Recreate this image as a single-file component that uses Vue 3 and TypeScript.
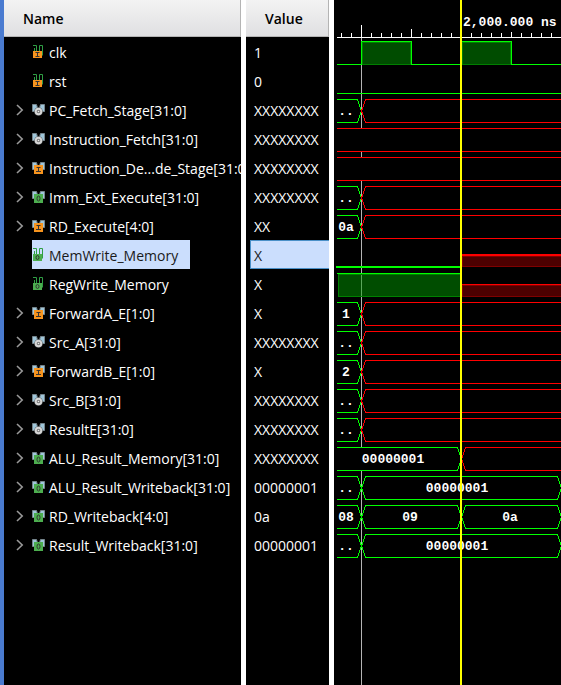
<script setup lang="ts">
type Kind = 'in' | 'out' | 'wire'
type Tone = 'g' | 'r'

interface Segment {
  from: number
  to: number
  tone: Tone
  text?: string
  at?: number
}

interface Signal {
  name: string
  value: string
  kind: Kind
  bus: boolean
  wave: 'clock' | 'low' | 'memwrite' | 'regwrite' | 'bus'
  segments?: Segment[]
  selected?: boolean
}

const T1 = 27.5
const T2 = 127.5
const T3 = 227.5
const END = 4000
const START = 3

const thenUnknown = (text: string): Segment[] => [
  { from: START, to: T1, tone: 'g', text, at: 12 },
  { from: T1, to: END, tone: 'r' },
]
const unknown: Segment[] = [{ from: START, to: END, tone: 'r' }]
const thenOne: Segment[] = [
  { from: START, to: T1, tone: 'g', text: '..', at: 12 },
  { from: T1, to: T3, tone: 'g', text: '00000001', at: 123 },
]

const bus = (name: string, value: string, kind: Kind, segments: Segment[]): Signal => ({
  name, value, kind, segments, bus: true, wave: 'bus',
})

const X8 = 'XXXXXXXX'

const signals: Signal[] = [
  { name: 'clk', value: '1', kind: 'in', bus: false, wave: 'clock' },
  { name: 'rst', value: '0', kind: 'in', bus: false, wave: 'low' },
  bus('PC_Fetch_Stage[31:0]', X8, 'wire', thenUnknown('..')),
  bus('Instruction_Fetch[31:0]', X8, 'wire', unknown),
  bus('Instruction_De...de_Stage[31:0]', X8, 'in', unknown),
  bus('Imm_Ext_Execute[31:0]', X8, 'out', thenUnknown('..')),
  bus('RD_Execute[4:0]', 'XX', 'in', thenUnknown('0a')),
  { name: 'MemWrite_Memory', value: 'X', kind: 'out', bus: false, wave: 'memwrite', selected: true },
  { name: 'RegWrite_Memory', value: 'X', kind: 'out', bus: false, wave: 'regwrite' },
  bus('ForwardA_E[1:0]', 'X', 'in', thenUnknown('1')),
  bus('Src_A[31:0]', X8, 'wire', thenUnknown('..')),
  bus('ForwardB_E[1:0]', 'X', 'in', thenUnknown('2')),
  bus('Src_B[31:0]', X8, 'wire', thenUnknown('..')),
  bus('ResultE[31:0]', X8, 'wire', thenUnknown('..')),
  bus('ALU_Result_Memory[31:0]', X8, 'out', [
    { from: START, to: T2, tone: 'g', text: '00000001', at: 59 },
    { from: T2, to: END, tone: 'r' },
  ]),
  bus('ALU_Result_Writeback[31:0]', '00000001', 'out', thenOne),
  bus('RD_Writeback[4:0]', '0a', 'out', [
    { from: START, to: T1, tone: 'g', text: '08', at: 12 },
    { from: T1, to: T2, tone: 'g', text: '09', at: 76 },
    { from: T2, to: T3, tone: 'g', text: '0a', at: 176 },
  ]),
  bus('Result_Writeback[31:0]', '00000001', 'out', thenOne),
]

// Outline of one bus value: flat rails that taper to a point at each transition.
function outline(s: Segment): string {
  const head = s.from === START ? `M${START} 27.5H${s.to - 4}` : `M${s.from} 16L${s.from + 4} 27.5H${s.to - 4}`
  const tail = `L${s.to} 16L${s.to - 4} 4.5`
  return s.from === START ? `${head}${tail}H${START}` : `${head}${tail}H${s.from + 4}L${s.from} 16`
}

const tickTop = (i: number): number => {
  if (i === 2) return 25
  if (i === 7) return 29
  return i % 5 === 2 ? 32 : 33
}

const ticks = Array.from({ length: 400 }, (_, i) => i)
  .filter((i) => i !== 12)
  .map((i) => ({ x: 7.5 + i * 10, top: tickTop(i) }))
</script>

<template>
  <main class="viewer">
    <table class="signals">
      <colgroup>
        <col class="col-name" />
        <col class="col-value" />
        <col />
      </colgroup>
      <thead>
        <tr>
          <th class="head" scope="col">Name</th>
          <th class="head" scope="col">Value</th>
          <th class="ruler" scope="col">
            <svg class="wave ruler-art" aria-hidden="true">
              <path class="tick" d="M3 37.5H4000" />
              <path v-for="t in ticks" :key="t.x" class="tick" :d="`M${t.x} ${t.top}V37`" />
            </svg>
            <span class="time">2,000.000 ns</span>
          </th>
        </tr>
      </thead>
      <tbody>
        <tr v-for="s in signals" :key="s.name" :class="{ selected: s.selected }">
          <td>
            <div class="name-row">
              <span class="toggle-slot">
                <button v-if="s.bus" type="button" class="toggle" :aria-label="`Expand ${s.name}`">
                  <svg width="8" height="12" viewBox="0 0 8 12"><path d="M1 1L6.2 6L1 11" /></svg>
                </button>
              </span>
              <span class="label">
                <svg v-if="s.bus" class="icon" width="13" height="12" viewBox="0 0 13 12" aria-hidden="true">
                  <path class="flag" d="M0.5 0.5H4.5L5.5 4V7.5H0.5Z" />
                  <path class="flag" d="M12.5 0.5H8.5L7.5 4V7.5H12.5Z" />
                  <template v-if="s.kind === 'wire'">
                    <circle cx="6.5" cy="7.5" r="4.3" class="ring-edge" />
                    <circle cx="6.5" cy="7.5" r="2.8" class="ring" />
                    <circle cx="6.5" cy="7.5" r="0.8" class="ring-dot" />
                  </template>
                  <g v-else :class="['badge', s.kind]">
                    <rect x="2" y="3" width="9" height="9" />
                    <path v-if="s.kind === 'in'" d="M4.5 5.5H8.5M6.5 5.5V9.5M4 9.5H9" />
                    <ellipse v-else cx="6.5" cy="7.5" rx="1.5" ry="2.5" />
                  </g>
                </svg>
                <svg v-else class="icon" width="13" height="13" viewBox="0 0 13 13" aria-hidden="true">
                  <path class="pulse" d="M1 0.5H4.5V7M7.5 7V0.5H10.5V10.5M2.5 6V3" />
                  <g :class="['badge', s.kind]">
                    <rect x="1" y="6" width="9" height="7" />
                    <path v-if="s.kind === 'in'" d="M3.5 7.5H7.5M5.5 7.5V11.5M3.5 11.5H7.5" />
                    <ellipse v-else cx="5.5" cy="9.5" rx="1.5" ry="2" />
                  </g>
                </svg>
                <span class="text">{{ s.name }}</span>
              </span>
            </div>
          </td>
          <td><div class="value">{{ s.value }}</div></td>
          <td>
            <svg class="wave" role="img" :aria-label="`${s.name} waveform`">
              <path class="marker" d="M27.5 0V29" />
              <template v-if="s.wave === 'clock'">
                <rect class="fill-g" x="28.5" y="5.5" width="48" height="22" />
                <rect class="fill-g" x="128.5" y="5.5" width="48" height="22" />
                <path class="line g" d="M3 27.5H27.5V4.5H77.5V27.5H127.5V4.5H177.5V27.5H4000" />
                <path class="base-g" d="M28 27.5H77M128 27.5H177" />
              </template>
              <path v-else-if="s.wave === 'low'" class="line g" d="M3 27.5H4000" />
              <template v-else-if="s.wave === 'memwrite'">
                <path class="line g thick" d="M2 30H127" transform="translate(0 -3)" />
                <rect class="fill-r" x="128.5" y="16.5" width="4000" height="10" />
                <path class="line r thick" d="M128 14H4000" transform="translate(0 1)" />
              </template>
              <template v-else-if="s.wave === 'regwrite'">
                <rect class="fill-g clear" x="4.5" y="5.5" width="123" height="22" />
                <path class="line g" d="M3 4.5H127" />
                <rect class="fill-r" x="128.5" y="16.5" width="4000" height="11" />
                <path class="line r" d="M128 15.5H4000" />
              </template>
              <template v-else>
                <template v-for="seg in s.segments" :key="seg.from">
                  <path :class="['line', 'body', seg.tone]" :d="outline(seg)" />
                  <text v-if="seg.text" :x="seg.at" y="20">{{ seg.text }}</text>
                </template>
              </template>
            </svg>
          </td>
        </tr>
        <tr class="rest">
          <td></td>
          <td></td>
          <td class="wave-rest"></td>
        </tr>
      </tbody>
    </table>
  </main>
</template>

<style>
body {
  margin: 0;
  background: #000;
}
</style>

<style scoped>
.viewer {
  box-sizing: border-box;
  min-height: 100vh;
  border-left: 4px solid #4a7bd0;
  background: #000;
  color: #fff;
  font: 14px/20px 'Open Sans', 'Noto Sans', sans-serif;
  overflow: hidden;
}
.signals {
  width: 100%;
  height: 100vh;
  table-layout: fixed;
  border-collapse: separate;
  border-spacing: 0;
}
.col-name { width: 242px; }
.col-value { width: 88px; }
th, td {
  box-sizing: border-box;
  padding: 0;
  text-align: left;
  vertical-align: top;
}
th:not(:last-child), td:not(:last-child) { border-right: 5px solid #fff; }
thead tr { height: 37px; }
tbody tr { height: 29px; }
tbody tr.rest { height: auto; }
.head {
  height: 37px;
  padding-left: 19px;
  color: #000;
  font-weight: 600;
  vertical-align: middle;
  background: linear-gradient(#f3f3f3, #dfdfe1);
  box-shadow: inset -1px -1px #b4b4b4;
}
.ruler {
  position: relative;
  height: 37px;
}
.wave {
  display: block;
  width: 100%;
  height: 29px;
}
.ruler-art {
  height: 37px;
  overflow: visible;
}
.time {
  position: absolute;
  left: 129px;
  top: 13px;
  font: bold 13px/20px 'Liberation Mono', monospace;
  white-space: nowrap;
}
/* Cursor bar, drawn above the ruler and every row. */
.ruler::after {
  content: '';
  position: absolute;
  z-index: 1;
  left: 126px;
  top: 0;
  width: 2px;
  height: 100vh;
  min-height: 560px;
  background: #ff0;
}
.name-row {
  display: flex;
  height: 29px;
  overflow: hidden;
  white-space: nowrap;
}
.toggle-slot {
  flex: none;
  display: flex;
  align-items: center;
  width: 28px;
}
.toggle {
  display: flex;
  margin-left: 12px;
  padding: 0;
  border: 0;
  background: none;
}
.toggle path {
  fill: none;
  stroke: #999;
  stroke-width: 1.6;
}
.label {
  flex: none;
  display: flex;
  align-items: center;
  gap: 4px;
  padding-right: 12px;
}
.text {
  align-self: flex-start;
  line-height: 31px;
}
.value {
  box-sizing: border-box;
  height: 29px;
  margin-left: 4px;
  padding-left: 4px;
  line-height: 31px;
}
.selected .label {
  background: #cbdefd;
  color: #1a1a1a;
}
.selected .value {
  border: solid #4a90c8;
  border-width: 1px 0 1px 1px;
  padding-left: 3px;
  line-height: 29px;
  background: #cbdefd;
  color: #1a1a1a;
}
.icon { flex: none; }
.flag { fill: #9fc6da; stroke: #76858c; }
.ring-edge { fill: #55595c; }
.ring { fill: #777; stroke: #d6d6d6; stroke-width: 2; }
.ring-dot { fill: #eee; }
.pulse { fill: none; stroke: #2f9e44; stroke-width: 1; }
.badge path, .badge ellipse { fill: none; stroke: #333; stroke-width: 1; }
.badge.in rect { fill: #f7941e; }
.badge.out rect { fill: #4cae4f; }
.wave path { fill: none; stroke-width: 1; }
.wave .tick { stroke: #fff; shape-rendering: crispEdges; }
.wave .marker { stroke: #b4b4b4; shape-rendering: crispEdges; }
.wave .line { shape-rendering: crispEdges; }
.wave .g { stroke: #0f0; }
.wave .r { stroke: #f00; }
.wave .thick { stroke-width: 2; }
.wave .body { fill: #000; }
.fill-g { fill: #004c00; stroke: #008000; }
.fill-g.clear { fill: #00990080; }
.fill-r { fill: #4c0000; stroke: #800000; }
.wave .base-g { stroke: #008000; }
.wave text {
  fill: #fff;
  font: bold 13px 'Liberation Mono', monospace;
  text-anchor: middle;
}
.wave-rest {
  background: linear-gradient(#b4b4b4, #b4b4b4) 27px 0 / 1px 100% no-repeat;
}
</style>
